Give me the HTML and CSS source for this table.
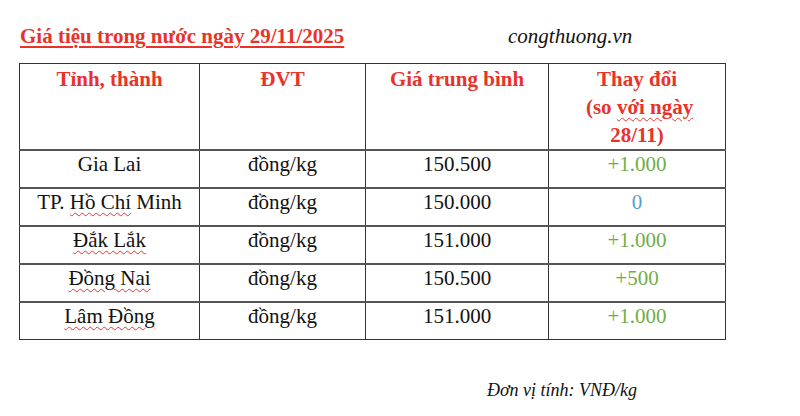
FILE: index.html
```html
<!DOCTYPE html>
<html lang="vi">
<head>
<meta charset="utf-8">
<link rel="stylesheet" href="styles.css">
</head>
<body>
<div class="page">
  <div class="top">
    <div class="title">Giá <span class="dot">tiệu</span> trong nước ngày 29/11/2025</div>
    <div class="site">congthuong.vn</div>
  </div>
  <table class="prices">
    <colgroup>
      <col class="c1"><col class="c2"><col class="c3"><col class="c4">
    </colgroup>
    <thead>
      <tr>
        <th>Tỉnh, thành</th>
        <th>ĐVT</th>
        <th>Giá trung bình</th>
        <th>Thay đổi<br>&nbsp;(so <span class="wavy">với ngày</span><br>28/11)</th>
      </tr>
    </thead>
    <tbody>
      <tr><td>Gia Lai</td><td>đồng/kg</td><td>150.500</td><td class="up">+1.000</td></tr>
      <tr><td>TP. <span class="wavy">Hồ Chí</span> Minh</td><td>đồng/kg</td><td>150.000</td><td class="zero">0</td></tr>
      <tr><td><span class="wavy">Đắk Lắk</span></td><td>đồng/kg</td><td>151.000</td><td class="up">+1.000</td></tr>
      <tr><td><span class="wavy">Đồng Nai</span></td><td>đồng/kg</td><td>150.500</td><td class="up">+500</td></tr>
      <tr><td><span class="wavy">Lâm Đồng</span></td><td>đồng/kg</td><td>151.000</td><td class="up">+1.000</td></tr>
    </tbody>
  </table>
  <div class="unit">Đơn vị tính: VNĐ/kg</div>
</div>
</body>
</html>
```
FILE: styles.css
```css
html, body {
  margin: 0;
  padding: 0;
  background: #ffffff;
}
.page {
  width: 800px;
  height: 416px;
  padding: 24px 0 0 19px;
  box-sizing: border-box;
  font-family: "Liberation Serif", "Times New Roman", serif;
  color: #111;
  overflow: hidden;
}
.top {
  display: flex;
  align-items: baseline;
  height: 39px;
}
.title {
  font-weight: bold;
  font-size: 21px;
  color: #e8332a;
  text-decoration: underline;
  text-decoration-thickness: 2px;
  text-underline-offset: 3px;
  margin-left: 1px;
  width: 488px;
  flex: none;
}
.dot {
  text-decoration: underline dotted #e8332a;
}
.site {
  font-style: italic;
  font-size: 21px;
  color: #111;
}
.prices {
  border-collapse: collapse;
  width: 706px;
  table-layout: fixed;
}
.c1 { width: 180px; }
.c2 { width: 166px; }
.c3 { width: 183px; }
.c4 { width: 177px; }
.prices th, .prices td {
  border: 1.5px solid #333;
  text-align: center;
  vertical-align: top;
  padding: 0;
}
.prices th {
  height: 84px;
  color: #e8332a;
  font-weight: bold;
  font-size: 21px;
  line-height: 28px;
  padding-top: 1px;
}
.prices td {
  height: 36px;
  font-size: 21px;
  line-height: 26px;
  padding-top: 0;
}
.prices tbody tr td {
  border-top: 2px solid #555;
}
.wavy {
  text-decoration: underline wavy #e33;
  text-decoration-thickness: 1px;
  text-underline-offset: 3px;
}
.up { color: #70ad47; }
.zero { color: #5b9bd5; }
.unit {
  font-style: italic;
  font-size: 18px;
  margin: 40px 0 0 468px;
}
```
